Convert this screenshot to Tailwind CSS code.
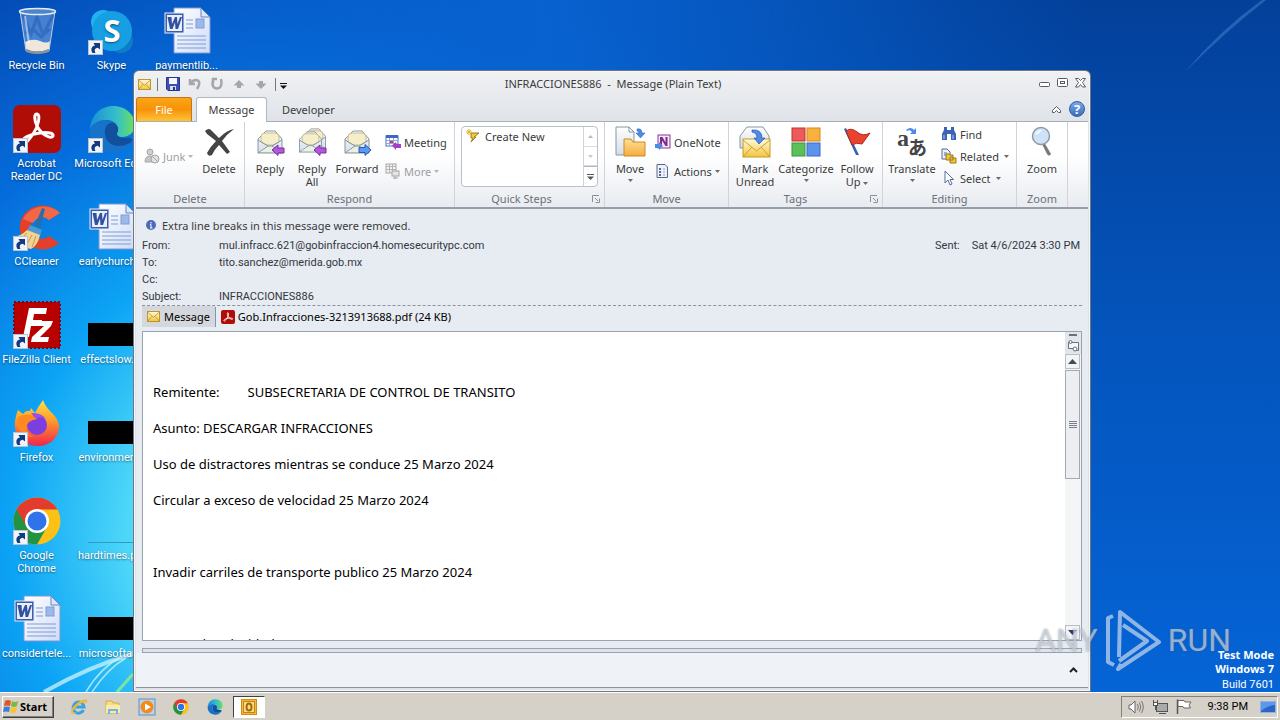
<!DOCTYPE html>
<html lang="en">
<head>
<meta charset="UTF-8" />
<meta name="viewport" content="width=device-width, initial-scale=1" />
<title>INFRACCIONES886 - Message (Plain Text)</title>
<script src="https://cdn.jsdelivr.net/npm/@tailwindcss/browser@4"></script>
</head>
<body class="h-screen flex flex-col overflow-hidden font-['Noto_Sans',sans-serif] text-[11px] leading-[13px] text-[#3b3b3b]">

<!-- shared icons -->
<svg class="absolute size-0">
  <defs>
    <linearGradient id="page" x1="0" y1="0" x2="1" y2="1"><stop offset="0" stop-color="#fff"/><stop offset="1" stop-color="#cfdcf6"/></linearGradient>
    <linearGradient id="env" x1="0" y1="0" x2="0" y2="1"><stop offset="0" stop-color="#fffbe0"/><stop offset="1" stop-color="#f2c53c"/></linearGradient>
    <linearGradient id="paper" x1="0" y1="0" x2="0" y2="1"><stop offset="0" stop-color="#fff"/><stop offset="1" stop-color="#d3dce6"/></linearGradient>
    <linearGradient id="edge" x1="0" y1="0" x2="1" y2="0"><stop offset="0" stop-color="#1a8fd8"/><stop offset=".6" stop-color="#35c0c8"/><stop offset="1" stop-color="#6be05a"/></linearGradient>
    <linearGradient id="folder" x1="0" y1="0" x2="0" y2="1"><stop offset="0" stop-color="#ffdf95"/><stop offset="1" stop-color="#f5ad3e"/></linearGradient>
    <linearGradient id="flame" x1="0" y1="0" x2="0" y2="1"><stop offset="0" stop-color="#ffe14a"/><stop offset=".45" stop-color="#ff9a2a"/><stop offset="1" stop-color="#f0244e"/></linearGradient>
    <symbol id="shortcut" viewBox="0 0 15 15">
      <rect x=".5" y=".5" width="14" height="14" fill="#f0f3f8" stroke="#b9c2ce"/>
      <path d="M4.500 13C2 9 4 6 7 5.500L5.500 3H12V9.500L9.800 7.800C7 8 6 10 7.500 13Z" fill="#123a82"/>
    </symbol>
    <symbol id="word" viewBox="0 0 48 48">
      <path d="M11 1H38L47 10V46H11Z" fill="url(#page)" stroke="#7f97cf"/>
      <path d="M38 1V10H47Z" fill="#dbe6fb" stroke="#6684c8"/>
      <path d="M23 13H30M23 17H30M23 21H30M14 29H43M14 33H43M14 37H43M14 41H43" stroke="#7e9bd8"/>
      <rect x="33" y="12" width="8" height="9" fill="#9db9ea" stroke="#7e9bd8"/>
      <rect x="2" y="6" width="19" height="20" fill="#3d5db0" stroke="#e4ebfa"/>
      <rect x="4" y="8" width="15" height="16" fill="#e9effb"/>
      <path d="M4.500 10H8.500L9 17L12 10H14L14.500 17L17 10H19L15 22H12.500L12 15.500L9.500 22H7Z" fill="#31519f"/>
    </symbol>
    <symbol id="chrome" viewBox="0 0 48 48">
      <circle cx="24" cy="24" r="23.500" fill="#fbc116"/>
      <path d="M3.500 12.500A23.500 23.500 0 0 0 24 47.500L34.300 29.500L24 24Z" fill="#229342"/>
      <path d="M3.500 12.500L14 30L24 12.500H44.500A23.500 23.500 0 0 0 3.500 12.500Z" fill="#e33b2e"/>
      <circle cx="24" cy="24" r="12" fill="#fff"/><circle cx="24" cy="24" r="9.500" fill="#2f73ea"/>
    </symbol>
    <symbol id="edgeicon" viewBox="0 0 48 48">
      <path d="M2 24C3 10 13 1 25 1C39 1 47 11 47 20C47 28 40 32 34 32C29 32 28 30 29 28C31 26 30 22 28 19C23 13 9 13 2 24Z" fill="url(#edge)"/>
      <path d="M2 24C7 14 20 13 26 18C20 17 16 23 17 29C18 39 29 44 42 38C39 44 32 47 25 47C11 47 1 37 2 24Z" fill="#1673c8"/>
      <path d="M17 29C16 22 20 17 26 18C31 21 31 25 29 28C28 31 33 33 38 33C44 32 46 35 42 38C29 45 18 39 17 29Z" fill="#124f9c"/>
    </symbol>
    <symbol id="envelope" viewBox="0 0 14 12">
      <rect x=".5" y=".5" width="13" height="11" fill="url(#env)" stroke="#b99022"/>
      <path d="M1 1.500L7 7L13 1.500M1 11L5 6M13 11L9 6" fill="none" stroke="#c99a2b"/>
    </symbol>
    <symbol id="openmail" viewBox="0 0 26 24">
      <path d="M1 9L9 1H18L25 9V23H1Z" fill="url(#paper)" stroke="#8795a6"/>
      <path d="M4 12V7Q4 3 8 3H18Q22 3 22 7V12L16 15H10Z" fill="#f5eecb" stroke="#c8bd87"/>
      <path d="M1 10L11 16H15L25 10M1 23L11 16M25 23L15 16" fill="none" stroke="#8795a6"/>
      <path d="M3 22L11 17H15L23 22Z" fill="#e9f3dc"/>
    </symbol>
    <symbol id="pdf" viewBox="0 0 48 48">
      <rect width="48" height="48" rx="7" fill="#b10d07"/>
      <path d="M10 37C8 33 18 29 27 28C35 27 41 28 40 31C38 35 28 29 24 21C21 14 21 9 24 9C28 10 25 22 20 29C16 35 12 40 10 37Z" fill="none" stroke="#fff" stroke-width="3"/>
    </symbol>
    <symbol id="down" viewBox="0 0 5 3"><path d="M0 0H5L2.500 3Z" fill="currentColor" opacity=".75"/></symbol>
    <symbol id="up" viewBox="0 0 5 3"><path d="M0 3H5L2.500 0Z" fill="currentColor"/></symbol>
    <symbol id="launcher" viewBox="0 0 8 8"><path d="M.5 7V.5H7M3 3L6 6M7.500 3.500V7.500H3.500" fill="none" stroke="#8b9097"/></symbol>
    <symbol id="replyarrow" viewBox="0 0 14 12"><path d="M1 6L7 1V4H13V9H7V11.500Z" fill="#b05ad6" stroke="#7a2aa6"/></symbol>
    <symbol id="bluearrow" viewBox="0 0 14 12"><path d="M13 6L7 .5V3.500H1V8.500H7V11.500Z" fill="#5a9bf0" stroke="#2459b8"/></symbol>
  </defs>
</svg>

<main class="relative flex-1 min-h-0 overflow-hidden">
  <!-- wallpaper -->
  <svg class="absolute inset-0 size-full" viewBox="0 0 1280 692" preserveAspectRatio="none">
    <defs>
      <radialGradient id="glow" gradientUnits="userSpaceOnUse" cx="300" cy="530" r="800">
        <stop offset="0" stop-color="#b8f4fc"/><stop offset=".2" stop-color="#54dcf9"/><stop offset=".36" stop-color="#0ca4f5"/>
        <stop offset=".56" stop-color="#056cdb"/><stop offset=".76" stop-color="#044cb6"/><stop offset="1" stop-color="#0450b4"/>
      </radialGradient>
      <linearGradient id="side" x1="0" y1="0" x2="0" y2="1"><stop offset="0" stop-color="#03409a"/><stop offset=".5" stop-color="#0455bd"/><stop offset="1" stop-color="#0564d6"/></linearGradient>
      <linearGradient id="top" x1="0" y1="0" x2="1" y2="0"><stop offset=".1" stop-color="#0864d2" stop-opacity="0"/><stop offset=".42" stop-color="#0864d2" stop-opacity=".9"/><stop offset=".85" stop-color="#0864d2" stop-opacity="0"/></linearGradient>
      <linearGradient id="fade"><stop offset=".35" stop-color="#000"/><stop offset=".75" stop-color="#fff"/></linearGradient>
      <mask id="right"><rect width="1280" height="692" fill="url(#fade)"/></mask>
    </defs>
    <rect width="1280" height="692" fill="url(#glow)"/>
    <rect width="1280" height="692" fill="url(#side)" mask="url(#right)"/>
    <rect width="1280" height="100" fill="url(#top)"/>
    <path d="M1185 72Q1220 30 1262 0H1266Q1225 32 1185 72Z" fill="#6fb0ea" opacity=".3"/>
    <path d="M44 692Q90 666 133 654" fill="none" stroke="#c9f4ff" stroke-width="4" opacity=".75"/>
    <path d="M86 692Q100 668 122 656M92 692Q108 668 126 658" fill="none" stroke="#d9f8ff" stroke-width="1.500" opacity=".7"/>
    <path d="M117 692L133 674" stroke="#8ff08a" stroke-width="3" opacity=".8"/>
  </svg>

  <!-- desktop icons -->
  <nav class="relative grid grid-flow-col grid-rows-[repeat(7,98px)] auto-cols-[75px] w-max -ml-px pt-[7px] font-['Roboto',sans-serif] text-white text-center [text-shadow:0_1px_2px_rgb(0_0_0/0.5)]">
    <a href="#" class="flex flex-col items-center gap-1">
      <svg class="size-12" viewBox="0 0 48 48"><path d="M7 4H42L36 44Q24 48 13 44Z" fill="#bcd7f5" fill-opacity=".35" stroke="#b8cbe0"/><path d="M10 8L18 27L24 10L30 28L40 8M12 26L20 22L28 30L37 22" stroke="#1d4fa4" fill="none" opacity=".4" stroke-width="3"/><path d="M12 35Q20 31 27 34T37 34L36 42Q24 47 13 42Z" fill="#efe6dc"/><ellipse cx="24.500" cy="4.500" rx="18" ry="3" fill="#4c86cf" stroke="#e3ebf3" stroke-width="1.500"/><path d="M13 42Q24 47 36 42V45Q24 49 13 45Z" fill="#8c9299"/><path d="M12 9L16 37" stroke="#fff" opacity=".5" stroke-width="2"/></svg>
      <span>Recycle Bin</span>
    </a>
    <a href="#" class="flex flex-col items-center gap-1">
      <span class="relative size-12"><svg class="size-12"><use href="#pdf"/></svg><svg class="absolute left-0 bottom-0 size-[15px]"><use href="#shortcut"/></svg></span>
      <span>Acrobat<br>Reader DC</span>
    </a>
    <a href="#" class="flex flex-col items-center gap-1">
      <span class="relative size-12"><svg class="size-12" viewBox="0 0 48 48"><path d="M47 10A23 22 0 1 0 46 40L36 33A11 11 0 1 1 36 17Z" fill="#e2402a"/><path d="M47 10A23 22 0 0 0 10 16L20 20Q28 10 36 17Z" fill="#f0674a"/><path d="M29 5L32 6L27 25L22 23Z" fill="#2a6ea8"/><path d="M17 22L29 27L27 33L14 28Z" fill="#4b9bd0"/><path d="M14 27L27 32Q25 42 18 46Q8 44 0 34Q8 33 14 27Z" fill="#f3d294"/><path d="M14 30L6 38M19 32L13 43M23 33L19 44" stroke="#c79a50"/></svg><svg class="absolute left-0 bottom-0 size-[15px]"><use href="#shortcut"/></svg></span>
      <span>CCleaner</span>
    </a>
    <a href="#" class="flex flex-col items-center gap-1">
      <span class="relative size-12"><svg class="size-12" viewBox="0 0 48 48"><rect x="1" y="1" width="46" height="46" fill="#b80000" stroke="#7c0a14" stroke-width="2" stroke-dasharray="2 2"/><path d="M16 7H34L33 13H21L20 19H29L28 25H18L16 36H10Z" fill="#fff"/><path d="M22 20H40L38 25L27 36H36L35 41H18L19 36L31 25H22Z" fill="#fff"/></svg><svg class="absolute left-0 bottom-0 size-[15px]"><use href="#shortcut"/></svg></span>
      <span>FileZilla Client</span>
    </a>
    <a href="#" class="flex flex-col items-center gap-1">
      <span class="relative size-12"><svg class="size-12" viewBox="0 0 48 48"><path d="M5 11L10 15Q13 11 17 12L18 9L22 14Q25 8 30 1Q32 7 38 13Q47 21 46 30C44 41 35 47 25 47C11 47 0 36 2 23Q3 15 5 11Z" fill="url(#flame)"/><circle cx="24" cy="26" r="10" fill="#7b3fe0"/><path d="M5 18Q12 14 22 17L24 20Q18 21 15 24Q10 33 20 38Q8 38 4 26Z" fill="#ff8a22"/><path d="M18 14Q28 13 33 20Q27 17 22 19Z" fill="#9c4fe8"/></svg><svg class="absolute left-0 bottom-0 size-[15px]"><use href="#shortcut"/></svg></span>
      <span>Firefox</span>
    </a>
    <a href="#" class="flex flex-col items-center gap-1">
      <span class="relative size-12"><svg class="size-12"><use href="#chrome"/></svg><svg class="absolute left-0 bottom-0 size-[15px]"><use href="#shortcut"/></svg></span>
      <span>Google<br>Chrome</span>
    </a>
    <a href="#" class="flex flex-col items-center gap-1">
      <svg class="size-12"><use href="#word"/></svg>
      <span>considertele...</span>
    </a>
    <a href="#" class="flex flex-col items-center gap-1">
      <span class="relative size-12"><svg class="size-12" viewBox="0 0 48 48"><circle cx="15" cy="15" r="12" fill="#22b3ee"/><circle cx="33" cy="34" r="12" fill="#0d7cc9"/><circle cx="24" cy="24" r="20" fill="#16a0e3"/><text x="24" y="35" text-anchor="middle" font-family="Open Sans" font-weight="700" font-size="31" fill="#fff">S</text></svg><svg class="absolute left-0 bottom-0 size-[15px]"><use href="#shortcut"/></svg></span>
      <span>Skype</span>
    </a>
    <a href="#" class="flex flex-col items-center gap-1">
      <span class="relative size-12"><svg class="size-12"><use href="#edgeicon"/></svg><svg class="absolute left-0 bottom-0 size-[15px]"><use href="#shortcut"/></svg></span>
      <span class="whitespace-nowrap">Microsoft Edge</span>
    </a>
    <a href="#" class="flex flex-col items-center gap-1">
      <svg class="size-12"><use href="#word"/></svg>
      <span>earlychurch...</span>
    </a>
    <a href="#" class="flex flex-col items-center gap-1">
      <span class="flex items-center size-12 pt-[18px]"><span class="h-[23px] w-full bg-black"></span></span>
      <span>effectslow....</span>
    </a>
    <a href="#" class="flex flex-col items-center gap-1">
      <span class="flex items-center size-12 pt-[18px]"><span class="h-[23px] w-full bg-black"></span></span>
      <span>environmen...</span>
    </a>
    <a href="#" class="flex flex-col items-center gap-1">
      <span class="flex items-end size-12 pb-[2px]"><span class="h-px w-full bg-[#2f9cc0]"></span></span>
      <span>hardtimes.p...</span>
    </a>
    <a href="#" class="flex flex-col items-center gap-1">
      <span class="flex items-center size-12 pt-[18px]"><span class="h-[23px] w-full bg-black"></span></span>
      <span>microsoftat...</span>
    </a>
    <a href="#" class="flex flex-col items-center gap-1">
      <svg class="size-12"><use href="#word"/></svg>
      <span>paymentlib...</span>
    </a>
  </nav>

  <!-- message window -->
  <section class="absolute left-[133px] right-[189px] top-[70px] bottom-0 flex flex-col rounded-t-md border border-[#6f7681] bg-linear-to-b from-[#f0f1f3] to-[#dfe3e8] to-[52px] px-[2px] pb-[3px] shadow-[inset_0_0_0_1px_#f4f6f9]">
    <header class="flex items-center h-[26px] px-[2px]">
      <div class="flex items-center h-full">
        <svg class="w-[13px] h-[11px]"><use href="#envelope"/></svg>
        <span class="w-px h-[13px] ml-[6px] bg-[#777]"></span>
        <button aria-label="Save" class="ml-2"><svg class="size-[14px]" viewBox="0 0 14 14"><path d="M.5 .5H13.500V13.500H2L.5 12Z" fill="#3d4fb5" stroke="#29358a"/><rect x="3" y="1" width="8" height="6" fill="#f4f6fb"/><rect x="4" y="9" width="6" height="4" fill="#d5dbea"/><rect x="7" y="10" width="2" height="3" fill="#29358a"/></svg></button>
        <button aria-label="Undo" class="ml-2"><svg class="size-[14px]" viewBox="0 0 14 14"><path d="M2 2V7H7M2.500 6.500Q6 1.500 10 3.500Q13 6 9 12" fill="none" stroke="#a4a6aa" stroke-width="2.500"/></svg></button>
        <button aria-label="Redo" class="ml-2"><svg class="size-[14px]" viewBox="0 0 14 14"><path d="M7 2H3V6M3 3Q1 11 7 11.500Q13 11 11 2" fill="none" stroke="#a4a6aa" stroke-width="2.500"/></svg></button>
        <button aria-label="Previous" class="ml-2"><svg class="size-[14px]" viewBox="0 0 14 14"><path d="M7 3L12.500 8.500H9V11H5V8.500H1.500Z" fill="#a4a6aa"/></svg></button>
        <button aria-label="Next" class="ml-2"><svg class="size-[14px]" viewBox="0 0 14 14"><path d="M7 12L12.500 6.500H9V4H5V6.500H1.500Z" fill="#a4a6aa"/></svg></button>
        <span class="w-px h-[13px] ml-[7px] bg-[#777]"></span>
        <button aria-label="Customize Quick Access Toolbar" class="ml-1 pt-1"><svg class="w-[7px] h-[6px]" viewBox="0 0 7 6"><path d="M0 .5H7" stroke="#111"/><path d="M0 2.500H7L3.500 6Z" fill="#111"/></svg></button>
      </div>
      <h1 class="flex-1 pr-[100px] pb-[2px] text-center whitespace-pre">INFRACCIONES886  -  Message (Plain Text)</h1>
      <div class="flex items-center gap-[7px] pb-[2px]">
        <button aria-label="Minimize"><svg class="w-[11px] h-[10px]" viewBox="0 0 11 10"><rect x=".5" y="4.500" width="10" height="4" rx="1" fill="#fff" stroke="#555c66"/></svg></button>
        <button aria-label="Maximize"><svg class="w-[11px] h-[10px]" viewBox="0 0 11 10"><rect x=".5" y=".5" width="10" height="8" rx="1" fill="#fff" stroke="#555c66"/><rect x="3.500" y="3.500" width="4" height="2" fill="none" stroke="#555c66"/></svg></button>
        <button aria-label="Close"><svg class="w-[11px] h-[10px]" viewBox="0 0 11 10"><path d="M.5 .5H3.500L5.500 2.500L7.500 .5H10.500L7.500 4.500L10.500 9H7.500L5.500 6.500L3.500 9H.5L3.500 4.500Z" fill="#fff" stroke="#555c66"/></svg></button>
      </div>
    </header>

    <nav class="flex items-end h-[25px] border-b border-[#a9afb9]">
      <button class="w-14 h-full rounded-t-[3px] border border-b-0 border-[#c8741a] bg-linear-to-b from-[#f8a616] via-[#f79207] to-[#ffc433] text-white">File</button>
      <button class="w-[71px] h-[25px] ml-1 -mb-px pb-[2px] rounded-t-[3px] border border-b-0 border-[#b3b9c2] bg-white">Message</button>
      <button class="h-full ml-[15px]">Developer</button>
      <button aria-label="Minimize the Ribbon" class="ml-auto self-center"><svg class="w-[9px] h-[7px]" viewBox="0 0 9 7"><path d="M.5 4.500L4.500 .5L8.500 4.500V6.500H6.500L4.500 4.500L2.500 6.500H.5Z" fill="#fff" stroke="#555c66"/></svg></button>
      <button aria-label="Help" class="ml-2 mr-[3px] self-center size-4 rounded-full border border-[#2e5ca8] bg-linear-to-b from-[#7ba9e4] to-[#3c6cc0] text-white text-[13px] font-bold leading-[14px]">?</button>
    </nav>

    <!-- ribbon -->
    <div class="flex h-[87px] border-b-2 border-[#989ea8] bg-linear-to-b from-white from-40% to-[#e8ebf0]">
      <div class="flex flex-col w-[109px] border-r border-[#d0d4da]">
        <div class="flex h-[70px] pt-1 pl-2">
          <button class="flex items-center gap-[3px] w-[54px] h-[60px] text-[#9b9ea3]"><svg class="size-4" viewBox="0 0 16 16"><circle cx="6" cy="4" r="3" fill="#cfcfcf" stroke="#a5a5a5"/><path d="M1 14Q1 8 6 8T10 14Z" fill="#c5c5c5" stroke="#a5a5a5"/><circle cx="11" cy="11" r="4" fill="#e3e3e3" stroke="#a5a5a5"/><path d="M8 8L14 14" stroke="#a5a5a5"/></svg>Junk<svg class="w-[5px] h-[3px]"><use href="#down"/></svg></button>
          <button class="flex flex-col items-center w-[42px] gap-1"><svg class="size-8" viewBox="0 0 32 32"><path d="M2 5Q6 1 9 5L16 12Q24 4 31 3Q24 8 19 15L27 26L24 28L16 19Q11 24 9 29Q5 31 4 27Q7 21 13 15L4 8Z" fill="#454545"/></svg>Delete</button>
        </div>
        <span class="text-center text-[#6b7079]">Delete</span>
      </div>

      <div class="flex flex-col w-[210px] border-r border-[#d0d4da]">
        <div class="flex h-[70px] pt-1 pl-1">
          <button class="flex flex-col items-center w-[42px] gap-1"><svg class="size-8" viewBox="0 0 32 32"><use href="#openmail" x="3" y="4" width="26" height="24"/><use href="#replyarrow" x="17" y="18" width="14" height="12"/></svg>Reply</button>
          <button class="flex flex-col items-center w-[42px] gap-1"><svg class="size-8" viewBox="0 0 32 32"><use href="#openmail" x="6" y="2" width="25" height="22"/><use href="#openmail" x="2" y="5" width="25" height="22"/><use href="#replyarrow" x="17" y="18" width="14" height="12"/></svg>Reply<br>All</button>
          <button class="flex flex-col items-center w-12 gap-1"><svg class="size-8" viewBox="0 0 32 32"><use href="#openmail" x="3" y="4" width="26" height="24"/><use href="#bluearrow" x="17" y="18" width="14" height="12"/></svg>Forward</button>
          <div class="flex flex-col ml-1 pt-2 gap-[13px]">
            <button class="flex items-center gap-[3px] h-4"><svg class="size-4" viewBox="0 0 16 16"><rect x="1" y="2" width="12" height="10" fill="#fff" stroke="#4a6fc0"/><path d="M1 1H13V4H1Z" fill="#3f66c4"/><path d="M1 6.500H13M1 9.500H13M4.500 4V12M8.500 4V12" stroke="#8fa7dc"/><rect x="5" y="7" width="3" height="2" fill="#e0333c"/><path d="M7 11.500L11 8V10H16V14H11V16Z" fill="#a23fc8"/></svg>Meeting</button>
            <button class="flex items-center gap-[3px] h-4 text-[#9b9ea3]"><svg class="size-4" viewBox="0 0 16 16"><rect x="1" y="1" width="10" height="9" fill="#f3f3f3" stroke="#a5a5a5"/><path d="M1 3.500H11M1 6.500H11M4.500 1V10M7.500 1V10" stroke="#b5b5b5"/><rect x="7" y="8" width="7" height="5" fill="#e5e5e5" stroke="#a5a5a5"/><path d="M10 13V16M8 15H13" stroke="#a5a5a5"/></svg>More<svg class="w-[5px] h-[3px]"><use href="#down"/></svg></button>
          </div>
        </div>
        <span class="text-center text-[#6b7079]">Respond</span>
      </div>

      <div class="relative flex flex-col w-[150px] border-r border-[#d0d4da]">
        <div class="h-[70px] pt-1 px-[6px]">
          <div class="flex justify-between h-[61px] rounded-sm border border-[#bcc1c9] bg-white">
            <button class="flex items-center gap-[5px] self-start pt-[2px] pl-1"><svg class="size-[14px]" viewBox="0 0 14 14"><path d="M5 4H13L8 8H10L5 13L7 9H5Z" fill="#f5c93a" stroke="#9a7a1a"/><path d="M3 0V6M0 3H6M1 1L5 5M5 1L1 5" stroke="#eab020"/></svg>Create New</button>
            <div class="flex flex-col w-[14px] border-l border-[#d0d4da] text-[#b5b8bd]">
              <button aria-label="Row up" class="flex-1 grid place-items-center"><svg class="w-[5px] h-[3px]"><use href="#up"/></svg></button>
              <button aria-label="Row down" class="flex-1 grid place-items-center border-y border-[#d8dbe0]"><svg class="w-[5px] h-[3px]"><use href="#down"/></svg></button>
              <button aria-label="More quick steps" class="flex-1 grid place-items-center border-t border-[#b0b5bd]"><svg class="w-[7px] h-[6px]" viewBox="0 0 7 6"><path d="M0 .5H7" stroke="#555"/><path d="M0 2.500H7L3.500 6Z" fill="#555"/></svg></button>
            </div>
          </div>
        </div>
        <span class="pr-4 text-center text-[#6b7079]">Quick Steps</span>
        <button aria-label="Quick Steps options" class="absolute right-1 bottom-1"><svg class="size-2"><use href="#launcher"/></svg></button>
      </div>

      <div class="flex flex-col w-[124px] border-r border-[#d0d4da]">
        <div class="flex h-[70px] pt-1 pl-1">
          <button class="flex flex-col items-center w-[42px] gap-1"><svg class="size-8" viewBox="0 0 32 32"><path d="M2 1H15L20 6V29H2Z" fill="url(#paper)" stroke="#8795a6"/><path d="M15 1V6H20" fill="none" stroke="#8795a6"/><path d="M10 13H17L19 16H31V30H10Z" fill="url(#folder)" stroke="#c98a22"/><path d="M23 3Q28 2 28 7H31L26.500 12L22 7H25Q25 5 23 5Z" fill="#4f8ae6" stroke="#2459b8" stroke-width=".5"/></svg>Move<svg class="w-[5px] h-[3px]"><use href="#down"/></svg></button>
          <div class="flex flex-col ml-1 pt-2 gap-[13px]">
            <button class="flex items-center gap-[3px] h-4"><svg class="size-4" viewBox="0 0 16 16"><rect x="3" y="1" width="12" height="13" fill="#f5e8f7" stroke="#8a3a98"/><path d="M5 12V3H7.500L10.500 8.500V3H12.500V12H10.500L7 6.500V12Z" fill="#7c2a8c"/><path d="M0 10H4V8L8 12L4 16V14H0Z" fill="#4f8ae6"/></svg>OneNote</button>
            <button class="flex items-center gap-[3px] h-4"><svg class="size-4" viewBox="0 0 16 16"><path d="M2 1.500H10L12.500 4V14.500H2Z" fill="#eef2fa" stroke="#56688c"/><path d="M4 6H6M4 9H6M4 12H6" stroke="#2b3c66" stroke-width="1.500"/><path d="M8 6H10M8 9H10M8 12H10" stroke="#8ba0c8"/></svg>Actions<svg class="w-[5px] h-[3px]"><use href="#down"/></svg></button>
          </div>
        </div>
        <span class="text-center text-[#6b7079]">Move</span>
      </div>

      <div class="relative flex flex-col w-[154px] border-r border-[#d0d4da]">
        <div class="flex h-[70px] pt-1 pl-1">
          <button class="flex flex-col items-center w-11 gap-1"><svg class="size-8" viewBox="0 0 32 32"><path d="M1 10L8 1H24L30 10V22H1Z" fill="url(#paper)" stroke="#8795a6"/><rect x="4" y="13" width="27" height="18" fill="url(#env)" stroke="#c89a24"/><path d="M4 14L17.500 25L31 14M4 31L13 21M31 31L22 21" fill="none" stroke="#d0a030"/><path d="M13 4Q23 3 23 12H26L20 18L15 12H18Q18 7 13 6Z" fill="#4f8ae6" stroke="#2459b8" stroke-width=".7"/></svg>Mark<br>Unread</button>
          <button class="flex flex-col items-center w-[58px] gap-1"><svg class="size-8" viewBox="0 0 32 32"><rect x="2" y="2" width="13" height="13" fill="#ee5a5a" stroke="#c23030"/><rect x="17" y="2" width="13" height="13" fill="#f7b13c" stroke="#cf8a20"/><rect x="2" y="17" width="13" height="13" fill="#5cc05a" stroke="#3a963a"/><rect x="17" y="17" width="13" height="13" fill="#5a94ee" stroke="#3a68c0"/></svg>Categorize<svg class="w-[5px] h-[3px]"><use href="#down"/></svg></button>
          <button class="flex flex-col items-center w-11 gap-1"><svg class="size-8" viewBox="0 0 32 32"><path d="M3 3L5 2L18 29H15Z" fill="#2f63b4"/><path d="M5 5Q10 1 16 6T29 7L21 18Q15 16 11 19Z" fill="#e8432f" stroke="#b62415"/></svg><span>Follow<br>Up <svg class="inline w-[5px] h-[3px]"><use href="#down"/></svg></span></button>
        </div>
        <span class="pr-5 text-center text-[#6b7079]">Tags</span>
        <button aria-label="Tags options" class="absolute right-1 bottom-1"><svg class="size-2"><use href="#launcher"/></svg></button>
      </div>

      <div class="flex flex-col w-[134px] border-r border-[#d0d4da]">
        <div class="flex h-[70px] pt-1 pl-1">
          <button class="flex flex-col items-center w-[50px] gap-1"><svg class="size-8" viewBox="0 0 32 32"><text x="1" y="20" font-family="Liberation Serif" font-weight="700" font-size="24" fill="#444">a</text><text x="12" y="29" font-family="Noto Sans CJK JP" font-weight="700" font-size="19" fill="#444">あ</text><path d="M10 4Q15 0 18 4L20 2V8H14L16 6Q14 3 11 5Z" fill="#4f8ae6"/></svg>Translate<svg class="w-[5px] h-[3px]"><use href="#down"/></svg></button>
          <div class="flex flex-col ml-1 gap-[6px]">
            <button class="flex items-center gap-[3px] h-4"><svg class="size-4" viewBox="0 0 16 16"><path d="M3 1H6V4H10V1H13V4L15 8V14H10V8H6V14H1V8L3 4Z" fill="#3a63b8"/><path d="M3 9V13M12 9V13" stroke="#b5cbf2"/></svg>Find</button>
            <button class="flex items-center gap-[3px] h-4"><svg class="size-4" viewBox="0 0 16 16"><path d="M1 1H6L9 4V11H1Z" fill="#eef2fa" stroke="#56688c"/><path d="M3 5H6M3 7H7" stroke="#4a6fc0"/><path d="M5 6H8L9 7H12V12H5ZM9 9H11L12 10H15V15H9Z" fill="#f5c342" stroke="#9a7a1a"/></svg>Related<svg class="w-[5px] h-[3px] ml-[2px]"><use href="#down"/></svg></button>
            <button class="flex items-center gap-[3px] h-4"><svg class="size-4" viewBox="0 0 16 16"><path d="M4 1V13L7 10L9 15L11 14L9 9.500H12.500Z" fill="#fff" stroke="#5a6ea0"/></svg>Select<svg class="w-[5px] h-[3px] ml-[2px]"><use href="#down"/></svg></button>
          </div>
        </div>
        <span class="text-center text-[#6b7079]">Editing</span>
      </div>

      <div class="flex flex-col w-[51px] border-r border-[#d0d4da]">
        <button class="flex flex-col items-center h-[70px] pt-1 gap-1"><svg class="size-8" viewBox="0 0 32 32"><path d="M18 16L25 28Q23 31 21 28L16 18Z" fill="#77797d"/><circle cx="15" cy="10" r="8.500" fill="#cfe3f7" stroke="#8e9aa8" stroke-width="1.500"/><path d="M9 9Q11 4 16 4Q13 8 9 9Z" fill="#fff"/></svg>Zoom</button>
        <span class="text-center text-[#6b7079]">Zoom</span>
      </div>
    </div>

    <!-- message -->
    <div class="flex-1 min-h-0 flex flex-col bg-[#e7ebf2] pt-[9px] px-[6px]">
      <p class="flex items-center gap-[6px] h-[14px] pl-1">
        <svg class="size-[10px]" viewBox="0 0 10 10"><circle cx="5" cy="5" r="5" fill="#4a6cb8"/><path d="M5 2V3.500M4 4.500H5V8M4 8H6.500" stroke="#fff" fill="none"/></svg>
        Extra line breaks in this message were removed.
      </p>
      <dl class="grid grid-cols-[77px_1fr_auto] auto-rows-[17px] items-center pt-[5px] font-['Roboto',sans-serif] text-[#33373f]">
        <dt>From:</dt><dd>mul.infracc.621@gobinfraccion4.homesecuritypc.com</dd><dd class="flex gap-3 pr-[2px]"><span>Sent:</span><span>Sat 4/6/2024 3:30 PM</span></dd>
        <dt>To:</dt><dd class="col-span-2">tito.sanchez@merida.gob.mx</dd>
        <dt>Cc:</dt><dd class="col-span-2"></dd>
        <dt>Subject:</dt><dd class="col-span-2">INFRACCIONES886</dd>
      </dl>
      <div class="flex items-center h-[26px] border-t border-dashed border-[#8d939d] pb-1 text-black">
        <button class="flex items-center gap-1 h-[21px] px-[5px] bg-[#d4d8dc]"><svg class="w-[13px] h-[11px]"><use href="#envelope"/></svg>Message</button>
        <span class="w-px h-5 bg-[#7f94ba]"></span>
        <button class="flex items-center gap-[3px] h-[21px] pl-[5px]"><svg class="size-[14px]"><use href="#pdf"/></svg>Gob.Infracciones-3213913688.pdf (24 KB)</button>
      </div>
      <div class="flex-1 min-h-0 flex border border-[#9aa2b0] bg-white">
        <article class="flex-1 min-w-0 overflow-hidden pt-[51px] pl-[10px] text-[13px] leading-[18px] text-black"><p class="mb-[18px]">Remitente:<span class="pl-7">SUBSECRETARIA DE CONTROL DE TRANSITO</span></p><p class="mb-[18px]">Asunto: DESCARGAR INFRACCIONES</p><p class="mb-[18px]">Uso de distractores mientras se conduce 25 Marzo 2024</p><p class="mb-[54px]">Circular a exceso de velocidad 25 Marzo 2024</p><p class="mb-[54px]">Invadir carriles de transporte publico 25 Marzo 2024</p><p>Exceso de velocidad 25 Marzo 2024</p></article>
        <div class="flex flex-col w-4 bg-[#f4f5f7]">
          <div class="flex flex-col items-center gap-[3px] h-[22px] bg-[#e1e5ec] pt-[2px]">
            <span class="w-2 h-[2px] bg-[#6b7079]"></span>
            <svg class="w-[13px] h-[13px]" viewBox="0 0 13 13"><path d="M1.500 3.500H11.500V11.500H8.500L6 9.500H1.500Z" fill="#f5f6f8" stroke="#6b7079"/><circle cx="3.500" cy="3" r="1.500" fill="#fff" stroke="#6b7079"/><circle cx="8" cy="10" r="2" fill="#fff" stroke="#6b7079"/></svg>
          </div>
          <button aria-label="Scroll up" class="grid place-items-center h-[15px] mr-px border border-[#b9bec7] bg-[#f3f4f6]"><svg class="w-[9px] h-[5px]" viewBox="0 0 9 5"><path d="M0 5H9L4.500 0Z" fill="#444a55"/></svg></button>
          <div class="grid place-items-center h-[109px] mt-px mr-px border border-[#a3a8b2] bg-[#eceef1]"><svg class="w-2 h-[7px]" viewBox="0 0 8 7"><path d="M0 .5H8M0 2.500H8M0 4.500H8M0 6.500H8" stroke="#7a808b"/></svg></div>
          <button aria-label="Scroll down" class="grid place-items-center h-[15px] mt-auto mr-px border border-[#b9bec7] bg-[#f3f4f6]"><svg class="w-[9px] h-[5px]" viewBox="0 0 9 5"><path d="M0 0H9L4.500 5Z" fill="#33385a"/></svg></button>
        </div>
      </div>
      <div class="h-[5px] mt-[7px] border border-[#9aa2b0] bg-[#dfe3ea]"></div>
    </div>
    <footer class="flex items-center justify-end h-[35px] pr-[10px] border-b border-[#8d939d] bg-[#eff2f6]">
      <button aria-label="Expand people pane"><svg class="w-[9px] h-[6px]" viewBox="0 0 9 6"><path d="M1 5L4.500 1.500L8 5" fill="none" stroke="#222" stroke-width="2"/></svg></button>
    </footer>
  </section>

  <!-- watermark -->
  <div class="absolute right-[49px] bottom-5 flex items-center gap-[7px] h-16 font-['Roboto',sans-serif] text-[32px] leading-[36px] text-[#dfe6ef]/60 pointer-events-none [text-shadow:0_0_2px_rgb(90_100_115/0.6)]">
    <span>ANY</span>
    <svg class="w-14 h-[62px]" viewBox="0 0 56 62" fill="none" stroke="#c9d9ee" stroke-opacity=".7" stroke-width="4" stroke-linejoin="round"><path d="M8 7L3 9V53L9 56M16 55L13 60L54 33L15 3L14 48M18 16L42 32L14 52"/></svg>
    <span>RUN</span>
  </div>

  <div class="absolute right-[6px] bottom-0 flex flex-col text-right text-white leading-[14px]">
    <b>Test Mode</b>
    <b>Windows 7</b>
    <span class="pt-[2px] font-['Roboto',sans-serif]">Build 7601</span>
  </div>
</main>

<!-- taskbar -->
<footer class="flex items-center h-7 px-[2px] border-t border-white bg-[#d5d1c9] text-black">
  <button class="flex items-center gap-px h-[22px] w-[52px] border border-t-white border-l-white border-r-[#404040] border-b-[#404040] shadow-[inset_-1px_-1px_0_#808080] font-bold">
    <svg class="size-4" viewBox="0 0 16 16"><path d="M2 2Q5 0 8 2L7 7Q4 6 1 7Z" fill="#e2562a"/><path d="M9 2Q12 4 15 2L14 7Q11 9 8 7Z" fill="#7db93a"/><path d="M1 8Q4 7 7 8L6 13Q3 12 0 13Z" fill="#3b7fd8"/><path d="M8 8Q11 10 14 8L13 13Q10 15 7 13Z" fill="#f5c52e"/></svg>Start
  </button>
  <nav class="flex items-center gap-4 ml-4">
    <button aria-label="Internet Explorer"><svg class="size-[18px]" viewBox="0 0 18 18"><path d="M13.500 12A5.500 5.500 0 1 1 14 9H5" fill="none" stroke="#37a2e6" stroke-width="3"/><path d="M2 16Q-1 12 6 6T17 2Q18 4 16 6Q17 3 12 5T3 13Q1 16 6 14Q3 17 2 16Z" fill="#f0b92e"/></svg></button>
    <button aria-label="Explorer"><svg class="size-[18px]" viewBox="0 0 18 18"><path d="M2 3H8L9 5H15V15H2Z" fill="#f8dd84" stroke="#d4aa3c"/><path d="M2 7H16V15H2Z" fill="#fbeaa8"/><path d="M4 16V11H14V16H12V13H6V16Z" fill="#6fb5e6"/></svg></button>
    <button aria-label="Media Player"><svg class="size-[18px]" viewBox="0 0 18 18"><rect x="1" y="1" width="16" height="16" fill="#b7d3ee" stroke="#5f8fc4"/><circle cx="9" cy="9" r="6.500" fill="#f58a1c"/><path d="M7 5.500L13 9L7 12.500Z" fill="#fff"/></svg></button>
    <button aria-label="Chrome" class="px-px"><svg class="size-4"><use href="#chrome"/></svg></button>
    <button aria-label="Edge" class="px-px"><svg class="size-4"><use href="#edgeicon"/></svg></button>
  </nav>
  <button aria-label="Outlook" class="grid place-items-center w-8 h-[22px] ml-[9px] border border-t-[#404040] border-l-[#404040] border-white bg-white"><svg class="size-4" viewBox="0 0 16 16"><rect x=".5" y=".5" width="15" height="15" fill="#f3b93a" stroke="#d08c14"/><rect x="2.500" y="2.500" width="11" height="11" fill="#fbdc86" stroke="#c9820f"/><ellipse cx="8" cy="8" rx="2.500" ry="3.500" fill="none" stroke="#a5690a" stroke-width="2"/></svg></button>
  <div class="flex items-center ml-auto h-[22px] pl-[6px] pr-px border border-t-[#808080] border-l-[#808080] border-white">
    <button aria-label="Volume"><svg class="w-4 h-[14px]" viewBox="0 0 16 14"><path d="M1 5H3L7 1V13L3 9H1Z" fill="#fff" stroke="#666"/><path d="M9.500 4Q11 7 9.500 10M11.500 2.500Q14 7 11.500 11.500M13.500 1Q17 7 13.500 13" fill="none" stroke="#777"/></svg></button>
    <button aria-label="Network" class="ml-2"><svg class="w-4 h-[14px]" viewBox="0 0 16 14"><rect x="4.500" y="3.500" width="11" height="8" fill="#aaa" stroke="#555"/><path d="M7 13.500H14" stroke="#555"/><path d="M1.500 0V4H5.500V0M3.500 4V10" fill="none" stroke="#555"/><rect x="1.500" y="2.500" width="4" height="3" fill="#fff" stroke="#555"/></svg></button>
    <button aria-label="Action Center" class="ml-2"><svg class="w-4 h-[15px]" viewBox="0 0 16 15"><path d="M1.500 15V.5" stroke="#555" stroke-width="1.500"/><path d="M2 1.500H8L9 3H15L13 6L14.500 9H8L7 7.500H2Z" fill="#fff" stroke="#666"/></svg></button>
    <time class="ml-4 font-['Roboto',sans-serif]">9:38 PM</time>
    <button aria-label="Show desktop" class="ml-3"><svg class="size-4" viewBox="0 0 16 16"><rect x=".5" y="2.500" width="15" height="11" fill="#2a66c8" stroke="#8fb2e0"/><path d="M1 3H15V6Q8 6 1 12Z" fill="#5d97e8"/></svg></button>
  </div>
</footer>
</body>
</html>
